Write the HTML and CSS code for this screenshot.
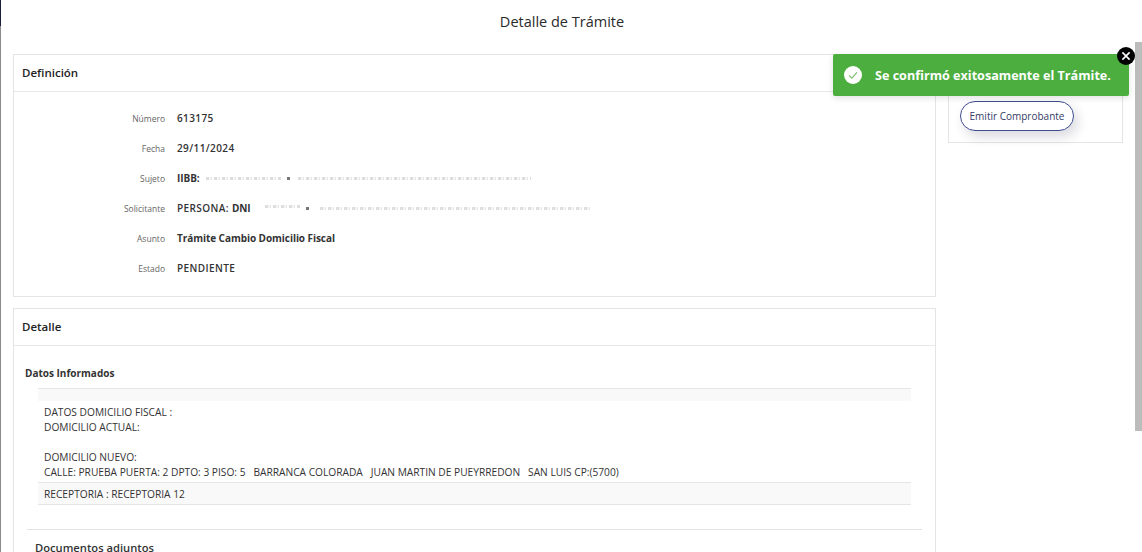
FILE: index.html
```html
<!DOCTYPE html>
<html lang="es">
<head>
<meta charset="utf-8">
<title>Detalle de Trámite</title>
<link rel="stylesheet" href="styles.css">
</head>
<body>
<div class="modal">
  <h1 class="title">Detalle de Trámite</h1>
  <div class="layout">
    <div class="main">
      <section class="card">
        <h2 class="card-head">Definición</h2>
        <dl class="fields">
          <div class="field"><dt>Número</dt><dd>613175</dd></div>
          <div class="field"><dt>Fecha</dt><dd>29/11/2024</dd></div>
          <div class="field"><dt>Sujeto</dt><dd><b>IIBB:</b><span class="blur blur-a"></span><i class="dot"></i><span class="blur blur-b"></span></dd></div>
          <div class="field"><dt>Solicitante</dt><dd>PERSONA: <b>DNI</b><span class="blur blur-c"></span><i class="dot"></i><span class="blur blur-d"></span></dd></div>
          <div class="field"><dt>Asunto</dt><dd><b>Trámite Cambio Domicilio Fiscal</b></dd></div>
          <div class="field"><dt>Estado</dt><dd>PENDIENTE</dd></div>
        </dl>
      </section>
      <section class="card">
        <h2 class="card-head">Detalle</h2>
        <div class="detail">
          <h3 class="sub">Datos Informados</h3>
          <div class="info">
            <div class="stripe"></div>
            <div class="info-body">DATOS DOMICILIO FISCAL :<br>DOMICILIO ACTUAL:<br><br>DOMICILIO NUEVO:<br>CALLE: PRUEBA PUERTA: 2 DPTO: 3 PISO: 5 &nbsp; BARRANCA COLORADA &nbsp; JUAN MARTIN DE PUEYRREDON &nbsp; SAN LUIS CP:(5700)</div>
            <div class="stripe stripe-text">RECEPTORIA : RECEPTORIA 12</div>
          </div>
          <hr class="rule">
          <h3 class="docs">Documentos adjuntos</h3>
        </div>
      </section>
    </div>
    <aside class="card side">
      <h2 class="card-head">Comprobante</h2>
      <div class="side-body"><button class="btn" type="button">Emitir Comprobante</button></div>
    </aside>
  </div>
</div>
<div class="scrollbar"></div>
<div class="toast">
  <svg class="toast-icon" viewBox="0 0 18 18" width="18" height="18"><circle cx="9" cy="9" r="9" fill="#fff"/><path d="M5 9.4l2.8 2.8L13 6.4" fill="none" stroke="#7cb96f" stroke-width="1.1"/></svg>
  <span>Se confirmó exitosamente el Trámite.</span>
  <svg class="toast-close" viewBox="0 0 18 18" width="18" height="18"><circle cx="9" cy="9" r="9" fill="#000"/><path d="M5.4 5.4l7.2 7.2M12.6 5.4l-7.2 7.2" stroke="#fff" stroke-width="1.6"/></svg>
</div>
</body>
</html>
```
FILE: styles.css
```css
html, body {
  margin: 0;
  height: 552px;
  overflow: hidden;
  background: #fff;
}
body {
  font-family: "Open Sans", "Noto Sans", sans-serif;
  color: #212529;
  font-size: 10px;
  position: relative;
}
.modal {
  height: 552px;
  box-sizing: border-box;
  border-left: 1px solid #8b8b90;
  padding-right: 6px;
}
.modal::before {
  content: "";
  position: absolute;
  left: 0;
  top: 0;
  width: 1px;
  height: 26px;
  background: #1b1f3d;
}
.title {
  margin: 0;
  height: 54px;
  box-sizing: border-box;
  padding-top: 12px;
  padding-right: 13px;
  text-align: center;
  font-size: 14.5px;
  line-height: 20px;
  font-weight: 500;
  color: #2b2b2b;
}
.layout {
  display: grid;
  grid-template-columns: 923px 175px;
  column-gap: 12px;
  padding-left: 12px;
  align-items: start;
}
.main {
  display: flex;
  flex-direction: column;
  gap: 11px;
}
.card {
  border: 1px solid #e4e4e4;
  background: #fff;
}
.card-head {
  margin: 0;
  height: 36px;
  padding-left: 8px;
  border-bottom: 1px solid #e8e8e8;
  font-size: 11.5px;
  font-weight: 600;
  line-height: 36px;
  color: #222;
}
.fields {
  margin: 0;
  padding: 11px 0 13px;
}
.field {
  display: flex;
  height: 30px;
  align-items: center;
}
.field dt {
  width: 151px;
  text-align: right;
  font-size: 8.5px;
  color: #666;
}
.field dd {
  margin: 0 0 0 12px;
  font-size: 10px;
  font-weight: 600;
  letter-spacing: .4px;
  color: #333;
  display: flex;
  align-items: center;
  white-space: pre;
}
.field b {
  font-weight: 700;
  letter-spacing: -.06px;
}
.blur {
  height: 3px;
  display: block;
  background: repeating-linear-gradient(90deg, #dcdee0 0 3px, #f4f5f6 3px 5px, #e6e7e9 5px 6px, #fff 6px 8px);
}
.blur-a { width: 75px; margin-left: 6px; }
.blur-b { width: 233px; margin-left: 8px; }
.blur-c { width: 35px; margin: 0 0 3px 14px; }
.blur-d { width: 270px; margin-left: 11px; }
.dot {
  width: 3px;
  height: 3px;
  margin-left: 6px;
  background: #777;
}
.detail {
  padding: 18px 13px 0 11px;
}
.sub {
  margin: 0;
  font-size: 10px;
  font-weight: 700;
  line-height: 18px;
  color: #333;
}
.info {
  margin: 6px 11px 0 13px;
  font-size: 10.2px;
  line-height: 15px;
  color: #333;
}
.stripe {
  height: 12px;
  background: #f9f9f9;
  border-top: 1px solid #e6e6e6;
}
.stripe-text {
  height: 21px;
  line-height: 22px;
  padding-left: 6px;
  border-bottom: 1px solid #e6e6e6;
}
.info-body {
  padding: 4px 0 2px 6px;
  white-space: nowrap;
}
.rule {
  margin: 24px 0 0 2px;
  border: 0;
  border-top: 1px solid #e2e2e2;
}
.docs {
  margin: 9px 0 0 10px;
  font-size: 11.2px;
  font-weight: 600;
  line-height: 18px;
  color: #333;
}
.side-body {
  padding: 9px 11px 11px;
}
.side .card-head {
  padding-left: 11px;
  color: #999;
}
.btn {
  display: block;
  width: 114px;
  height: 30px;
  padding: 0;
  border: 1px solid #3f4d92;
  border-radius: 15px;
  background: #fff;
  font-family: inherit;
  font-size: 10px;
  color: #333a66;
  box-shadow: 4px 6px 12px rgba(40, 40, 70, .16);
}
.scrollbar {
  position: absolute;
  top: 42px;
  right: 0;
  width: 7px;
  height: 389px;
  background: #bcbcbc;
}
.toast {
  position: absolute;
  left: 833px;
  top: 54px;
  width: 296px;
  height: 42px;
  box-sizing: border-box;
  display: flex;
  align-items: center;
  gap: 13px;
  padding-left: 11px;
  background: #4cae3f;
  border-radius: 2px;
  color: #fff;
  font-size: 12.6px;
  font-weight: 700;
  box-shadow: 0 2px 6px rgba(0, 0, 0, .12);
}
.toast-icon {
  flex: none;
}
.toast-close {
  position: absolute;
  right: -6px;
  top: -7px;
}
```
